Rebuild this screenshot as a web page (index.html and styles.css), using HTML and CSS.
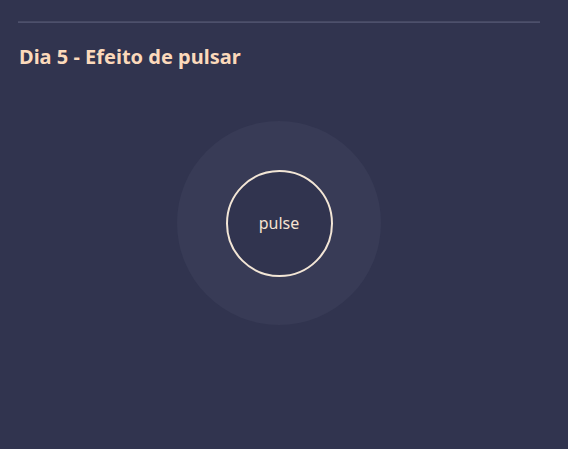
FILE: index.html
```html
<!DOCTYPE html>
<html lang="pt">
<head>
<meta charset="utf-8">
<title>Dia 5 - Efeito de pulsar</title>
<link rel="stylesheet" href="styles.css">
</head>
<body>
<main class="page">
  <hr class="divider">
  <h2 class="title">Dia 5 - Efeito de pulsar</h2>
  <section class="stage">
    <div class="halo">
      <div class="pulse">pulse</div>
    </div>
  </section>
</main>
</body>
</html>
```
FILE: styles.css
```css
html, body {
  margin: 0;
  padding: 0;
  background: #31344f;
  height: 100%;
}
body {
  font-family: "Noto Sans", "Open Sans", sans-serif;
  color: #fbd9bb;
}
.page {
  padding: 21px 0 0 18px;
  width: 522px;
}
.divider {
  margin: 0;
  height: 0;
  border: 0;
  border-top: 1px solid #464963;
  border-bottom: 1px solid #4d506c;
}
.title {
  margin: 21px 0 0 1px;
  font-size: 20px;
  font-weight: 700;
  line-height: 26px;
  color: #fbd9bb;
}
.stage {
  display: flex;
  justify-content: center;
  padding-top: 51px;
}
.halo {
  width: 204px;
  height: 204px;
  border-radius: 50%;
  background: #383b56;
  display: flex;
  align-items: center;
  justify-content: center;
}
.pulse {
  box-sizing: border-box;
  width: 107px;
  height: 107px;
  border-radius: 50%;
  border: 2px solid #f3e6d6;
  background: #31344f;
  display: flex;
  align-items: center;
  justify-content: center;
  font-size: 16px;
  color: #f6e3d2;
}
```
